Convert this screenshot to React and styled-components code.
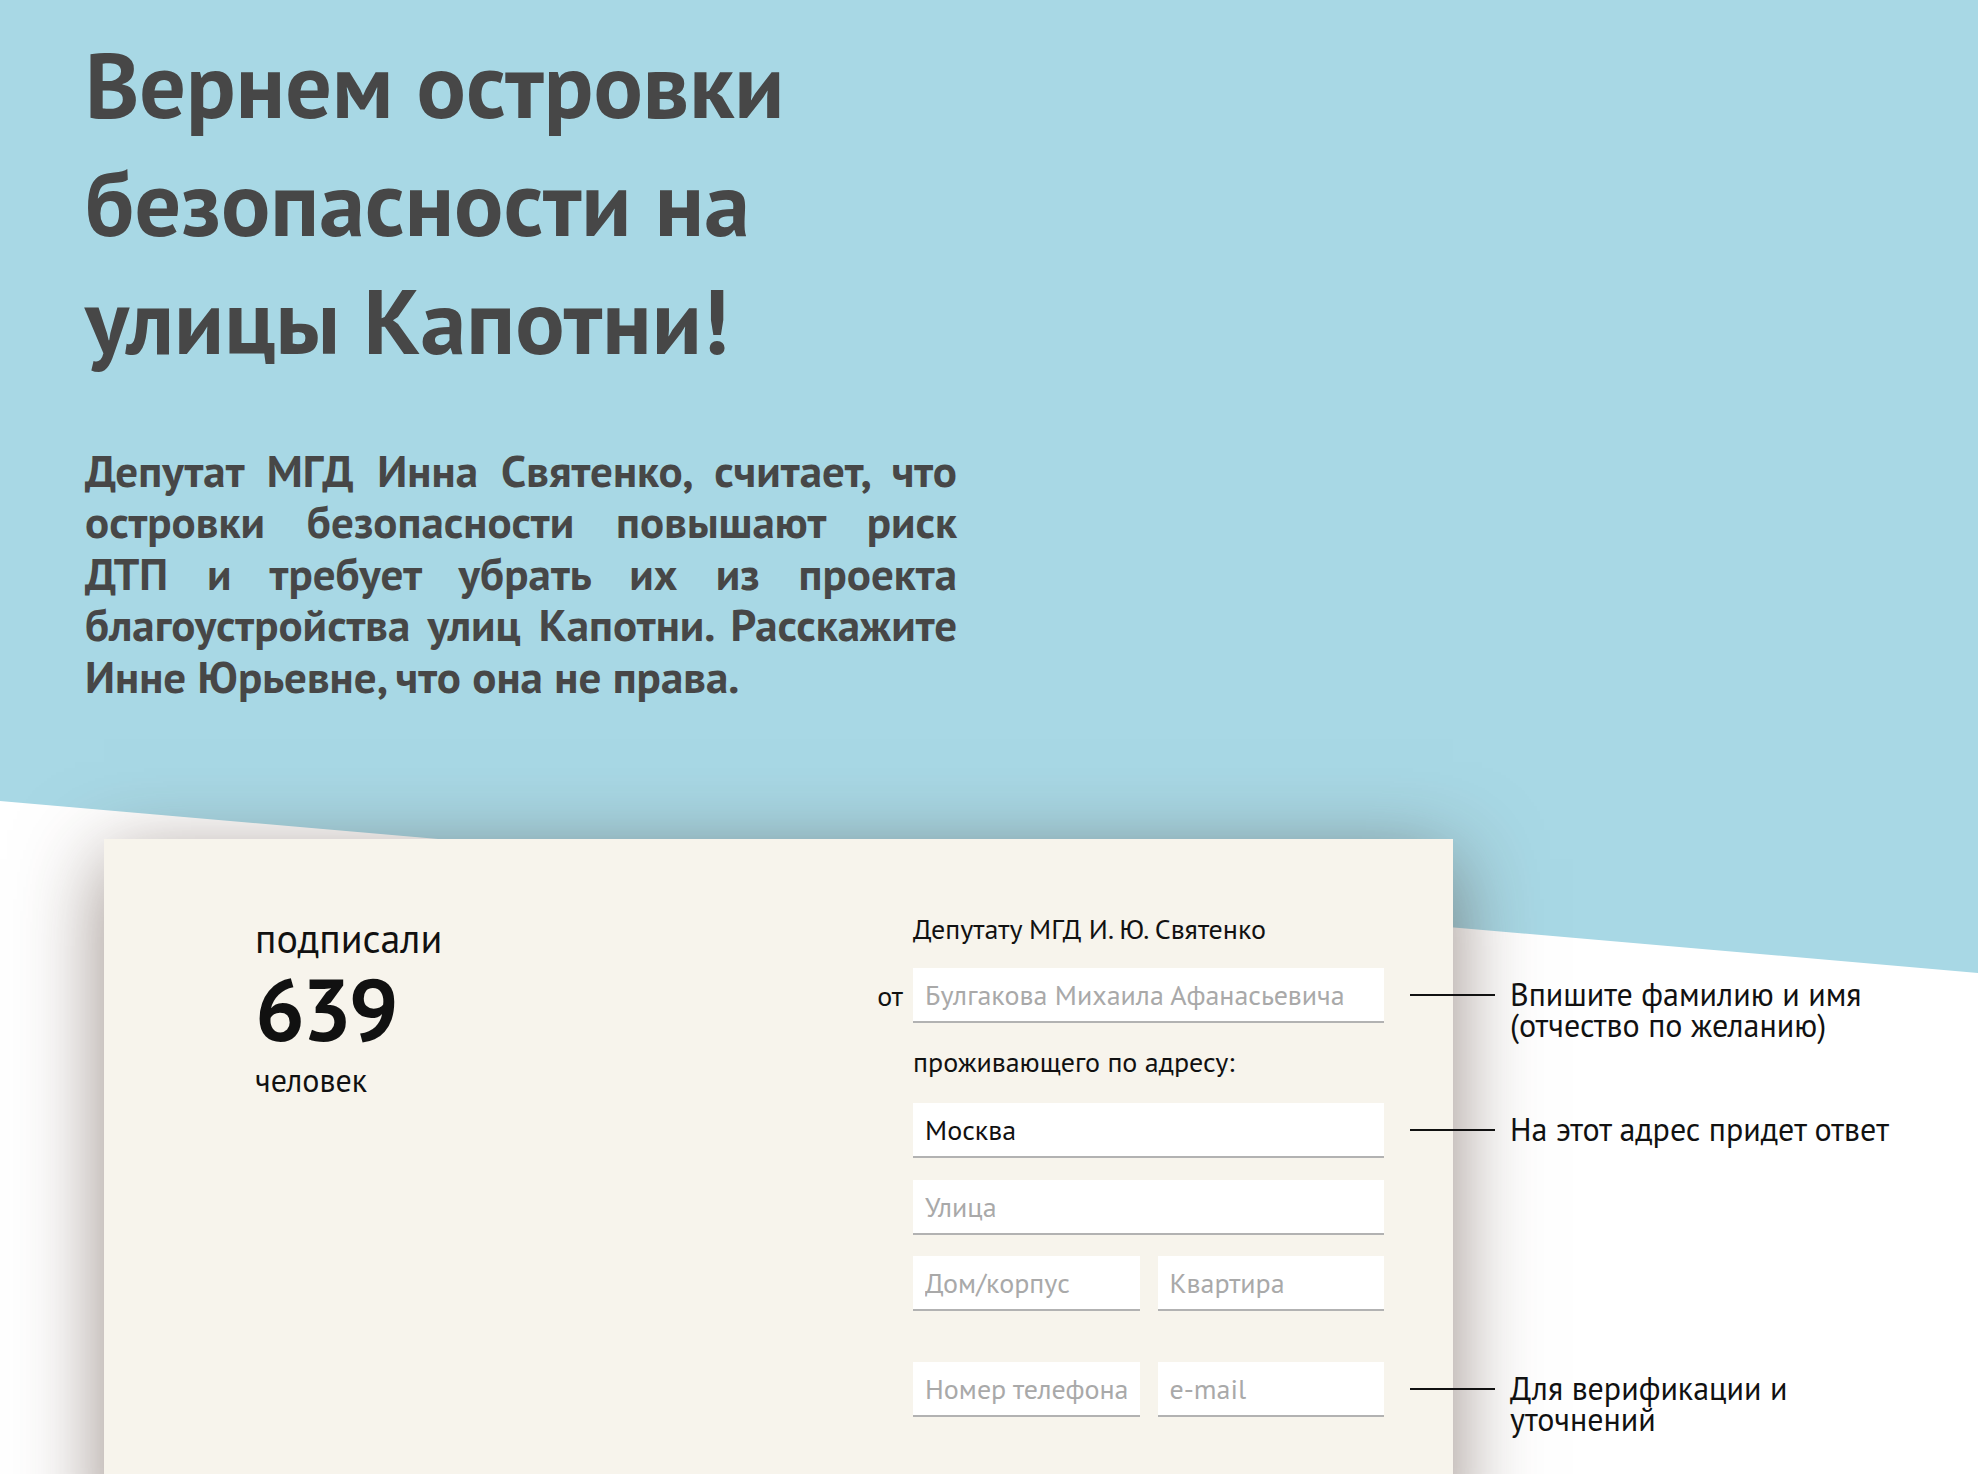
import styled, { createGlobalStyle } from "styled-components";

const FONT = `"PT Sans", "Liberation Sans Narrow", "Arial Narrow", "Roboto Condensed", "DejaVu Sans Condensed", Roboto, sans-serif`;

const GlobalStyle = createGlobalStyle`
  html, body {
    margin: 0;
    padding: 0;
  }

  body {
    font-family: ${FONT};
    background: #ffffff;
  }

  * {
    box-sizing: border-box;
  }
`;

const Page = styled.div`
  position: relative;
  height: 1474px;
  overflow: hidden;
  background: #a8d8e5;

  &::before {
    content: "";
    position: absolute;
    inset: 0;
    background: #ffffff;
    clip-path: polygon(0 801px, 100% 973px, 100% 100%, 0 100%);
  }
`;

const Hero = styled.header`
  position: relative;
  padding: 25px 0 0 85px;
  color: #474747;
`;

const Title = styled.h1`
  margin: 0;
  font-size: 92px;
  line-height: 118px;
  font-weight: 700;
`;

const Lead = styled.p`
  margin: 65.5px 0 0;
  width: 872px;
  font-size: 45px;
  line-height: 51.6px;
  font-weight: 700;
`;

const LeadLine = styled.span`
  display: block;
  text-align: left;
  text-align-last: ${(p) => (p.$last ? "left" : "justify")};
`;

const Card = styled.section`
  position: relative;
  display: flex;
  width: 1349px;
  min-height: 700px;
  margin: 137px 0 0 104px;
  padding: 74px 0 0 151px;
  background: #f7f4ec;
  box-shadow: 0 20px 80px rgba(70, 45, 35, 0.55);
`;

const Counter = styled.div`
  flex: 0 0 615px;
  padding-top: 3px;
  color: #111111;
`;

const CounterCaption = styled.div`
  margin-top: ${(p) => p.$offset || 0}px;
  font-size: ${(p) => p.$size}px;
  line-height: ${(p) => p.$size + 4}px;
`;

const CounterValue = styled.div`
  margin-top: 4px;
  font-size: 88px;
  line-height: 88px;
  font-weight: 700;
  letter-spacing: -3px;
`;

const Form = styled.form`
  display: flex;
  flex-direction: column;
  color: #111111;
  font-size: 28px;
`;

const Row = styled.div`
  display: flex;
  align-items: center;
  margin-top: ${(p) => p.$gap || 0}px;
`;

const Prefix = styled.span`
  flex: 0 0 43px;
  padding-right: 10px;
  text-align: right;
  line-height: 32px;
`;

const Label = styled.div`
  margin-left: 43px;
  line-height: 32px;
`;

const Fields = styled.div`
  display: flex;
  gap: 18px;
  width: 471px;
`;

const Input = styled.input`
  flex: 1;
  min-width: 0;
  height: 55px;
  padding: 0 12px;
  border: none;
  border-bottom: 2px solid #b2b2b2;
  border-radius: 0;
  background: #ffffff;
  font-family: ${FONT};
  font-size: 28px;
  color: #111111;
  outline: none;

  &::placeholder {
    color: #a9a9a9;
  }
`;

const Note = styled.div`
  display: flex;
  align-items: flex-start;
  gap: 15px;
  height: 31px;
  margin: 0 0 3px 26px;
  font-size: 32px;
  line-height: 31px;
  color: #111111;
  white-space: nowrap;

  &::before {
    content: "";
    flex: 0 0 85px;
    height: 2px;
    margin-top: 15px;
    background: #111111;
  }
`;

export default function App() {
  return (
    <>
      <GlobalStyle />
      <Page>
        <Hero>
          <Title>
            Вернем островки
            <br />
            безопасности на
            <br />
            улицы Капотни!
          </Title>
          <Lead>
            <LeadLine>Депутат МГД Инна Святенко, считает, что</LeadLine>
            <LeadLine>островки безопасности повышают риск</LeadLine>
            <LeadLine>ДТП и требует убрать их из проекта</LeadLine>
            <LeadLine>благоустройства улиц Капотни. Расскажите</LeadLine>
            <LeadLine $last>Инне Юрьевне, что она не права.</LeadLine>
          </Lead>
        </Hero>

        <Card>
          <Counter>
            <CounterCaption $size={40}>подписали</CounterCaption>
            <CounterValue>639</CounterValue>
            <CounterCaption $size={32} $offset={10}>
              человек
            </CounterCaption>
          </Counter>

          <Form onSubmit={(e) => e.preventDefault()}>
            <Label>Депутату МГД И. Ю. Святенко</Label>

            <Row $gap={23}>
              <Prefix>от</Prefix>
              <Fields>
                <Input placeholder="Булгакова Михаила Афанасьевича" />
              </Fields>
              <Note>
                Впишите фамилию и имя
                <br />
                (отчество по желанию)
              </Note>
            </Row>

            <Row $gap={23}>
              <Label>проживающего по адресу:</Label>
            </Row>

            <Row $gap={25}>
              <Prefix />
              <Fields>
                <Input defaultValue="Москва" />
              </Fields>
              <Note>На этот адрес придет ответ</Note>
            </Row>

            <Row $gap={22}>
              <Prefix />
              <Fields>
                <Input placeholder="Улица" />
              </Fields>
            </Row>

            <Row $gap={21}>
              <Prefix />
              <Fields>
                <Input placeholder="Дом/корпус" />
                <Input placeholder="Квартира" />
              </Fields>
            </Row>

            <Row $gap={51}>
              <Prefix />
              <Fields>
                <Input placeholder="Номер телефона" />
                <Input placeholder="e-mail" />
              </Fields>
              <Note>
                Для верификации и
                <br />
                уточнений
              </Note>
            </Row>
          </Form>
        </Card>
      </Page>
    </>
  );
}
